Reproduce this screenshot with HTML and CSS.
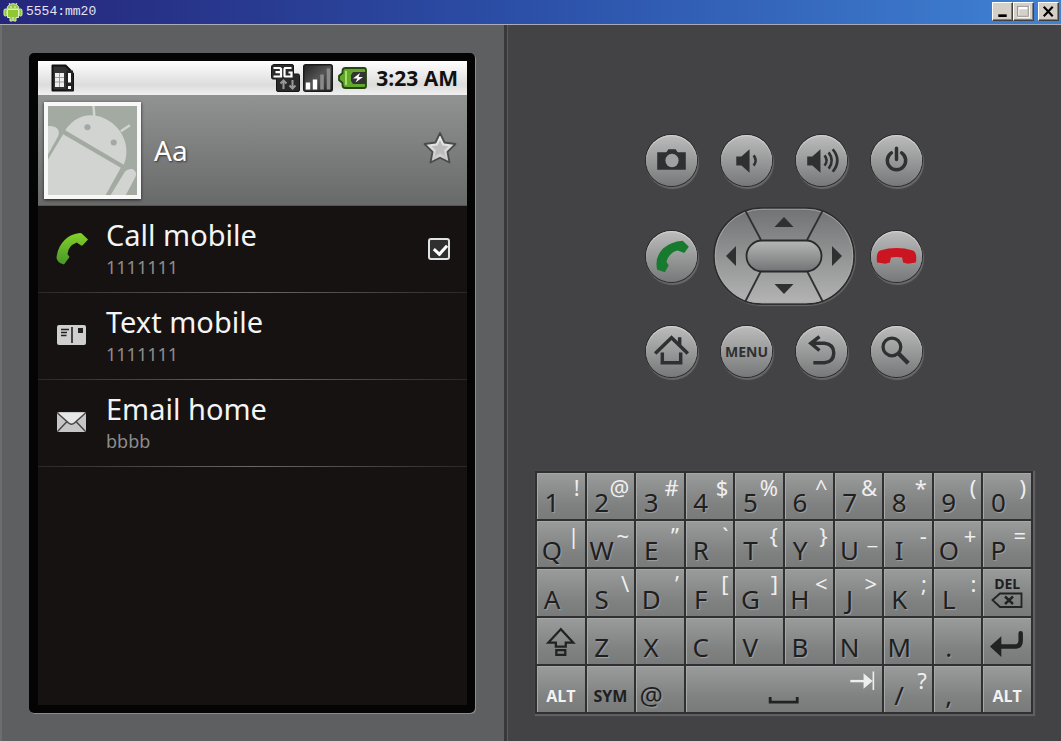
FILE: index.html
```html
<!DOCTYPE html>
<html lang="en">
<head>
<meta charset="utf-8">
<title>5554:mm20</title>
<link rel="stylesheet" href="styles.css">
</head>
<body>
<header class="titlebar">
  <svg class="titlebar-logo" viewBox="0 0 20 20" aria-hidden="true">
    <g fill="#8fc832" stroke="#dcefc0" stroke-width="1">
      <path d="M6 1l1.500 2.300M14 1l-1.500 2.300"/>
      <path d="M4 7a6 5.300 0 0 1 12 0z"/>
      <rect x="1" y="7" width="3" height="7" rx="1.400"/>
      <rect x="16" y="7" width="3" height="7" rx="1.400"/>
      <path d="M4.500 7.500h11v8h-2.500v3.500h-2.300v-3.500h-1.400v3.500h-2.300v-3.500h-2.500z"/>
    </g>
    <circle cx="8" cy="5" r=".8" fill="#fff"/><circle cx="12" cy="5" r=".8" fill="#fff"/>
  </svg>
  <h1 class="titlebar-text">5554:mm20</h1>
  <div class="titlebar-buttons">
    <button class="win-btn" aria-label="Minimize"><svg viewBox="0 0 18 16"><path d="M5 12h8" stroke="#000" stroke-width="2.500"/></svg></button>
    <button class="win-btn" aria-label="Maximize" disabled><svg viewBox="0 0 18 16"><path d="M4 3.500h10v9.500h-10zM4 5h10" fill="none" stroke="#fff" stroke-width="2"/><path d="M3.500 3h10v9.500h-10z" fill="none" stroke="#888"/></svg></button>
    <button class="win-btn win-close" aria-label="Close"><svg viewBox="0 0 18 16"><path d="M4.500 3.500l8.500 9M13 3.500l-8.500 9" stroke="#000" stroke-width="2"/></svg></button>
  </div>
</header>
<main class="emulator">
  <section class="device">
    <div class="phone">
      <div class="screen">
        <div class="status">
          <svg class="status-sim" viewBox="0 0 24 28" aria-hidden="true">
            <path d="M1.500 1.500h13l5 5v3h2.500v17h-20.500z" fill="#333" stroke="#111" stroke-width="2" stroke-linejoin="round"/>
            <path d="M4 9h9v14h-9z" fill="#eee"/><path d="M4 13.500h9M4 18h9M8.500 9v14" stroke="#888" stroke-width=".8"/>
            <path d="M15 6.500h7v20h-7z" fill="#222"/>
            <path d="M18.500 9v9.500M18.500 22v3" stroke="#fff" stroke-width="3"/>
          </svg>
          <svg class="status-3g" viewBox="0 0 29 28" aria-hidden="true">
            <path d="M3 .5h18q1.500 0 1.500 1.500v8h4.500q1.500 0 1.500 1.500v14.500q0 1.500-1.500 1.500h-20q-1.500 0-1.500-1.500v-11h-3.500q-1.500 0-1.500-1.500v-11q0-1.500 1.500-1.500z" fill="#2a2a2a" stroke="#151515"/>
            <path d="M2.500 4h6.500l1 1v7.500h-7.500M4.500 8.200h5.500M20.500 4h-6.500l-.5 1v7l.5.500h6.500v-4h-3" fill="none" stroke="#fff" stroke-width="2.200"/>
            <path d="M12.500 25v-8M9.500 19.500l3-3 3 3M21.500 16v8M18.500 21.500l3 3 3-3" fill="none" stroke="#999" stroke-width="2"/>
          </svg>
          <svg class="status-signal" viewBox="0 0 30 28" aria-hidden="true">
            <defs><linearGradient id="sig" x2="1" y2="1"><stop stop-color="#222"/><stop offset=".5" stop-color="#555"/><stop offset="1" stop-color="#222"/></linearGradient></defs>
            <rect x=".75" y=".75" width="28.500" height="26.500" rx="2" fill="url(#sig)" stroke="#1a1a1a" stroke-width="1.500"/>
            <path d="M5 25.500v-7M12 25.500v-10" stroke="#fff" stroke-width="4.400"/><path d="M19 25.500v-15M25.500 25.500v-21" stroke="#8a8a8a" stroke-width="3.600"/>
          </svg>
          <svg class="status-battery" viewBox="0 0 29 22" aria-hidden="true">
            <path d="M7.500 1h18.500q2 0 2 2v16q0 2-2 2h-18.500q-3 0-3-3v-2l-3.500-3v-4l3.500-3v-2q0-3 3-3z" fill="#63a82a" stroke="#244512" stroke-width="1.800"/>
            <path d="M8 4v14" stroke="#a6dc6a" stroke-width="2"/>
            <path d="M15 5h13v12h-13l-2-3v-6z" fill="#333"/><path d="M22 6l-7 5.500h4.500l-2 4 7.500-5.500h-4.500z" fill="#fff"/>
          </svg>
          <time class="status-time">3:23 AM</time>
        </div>
        <div class="contact">
          <svg class="avatar" viewBox="0 0 88 88" role="img" aria-label="Contact photo">
            <rect width="88" height="88" fill="#a2aaa2"/>
            <g fill="#d1d4d0">
              <path d="M17 24C31 3 53 7 66 19 78 30 80 46 75 58z"/>
              <path d="M15 28L72 61 57 88H0V53z"/>
              <path d="M0 20c7-1 13 3 10 10L0 48z"/>
              <path d="M76 65c6-6 14-1 10 6L77 88H62z"/>
            </g>
            <path d="M45 0l1 13M72 25l9-6" stroke="#d1d4d0" stroke-width="2.500"/>
            <circle cx="39" cy="21" r="3" fill="#a2a8a2"/><circle cx="65" cy="36" r="3" fill="#a2a8a2"/>
          </svg>
          <h2 class="contact-name">Aa</h2>
          <button class="star" aria-label="Favorite"><svg viewBox="0 0 34 34">
            <defs><linearGradient id="st" x2="0" y2="1"><stop stop-color="#f4f4f4"/><stop offset="1" stop-color="#c4c4c4"/></linearGradient></defs>
            <path d="M17 2l4.500 9.500 11 1.500-8 7.800 2 10.700L17 26.800 7.500 31.500l2-10.700L1.500 13l11-1.500z" fill="url(#st)" stroke="#4a4a4a" stroke-width="1.800" stroke-linejoin="round"/>
            <path d="M17 9l2.500 5.500 6 .8-4.500 4 1.200 6-5.200-3-5.200 3 1.200-6-4.500-4 6-.8z" fill="#bcbcbc"/></svg></button>
        </div>
        <ul class="actions">
          <li class="action">
            <svg class="action-icon" viewBox="0 0 34 34" aria-hidden="true">
              <defs><linearGradient id="ph" x2="0" y2="1"><stop stop-color="#86d128"/><stop offset="1" stop-color="#46962a"/></linearGradient></defs>
              <path d="M1.500 26C3 11 13 2 25 1q1.500 0 2.500 1.200l5.500 5.300-5.500 6-1.500 0-4.200-3Q13 14 12.500 22l2 3-5.500 7.500q-6.500-1.500-7.500-6.500z" fill="url(#ph)"/></svg>
            <div class="action-text"><a class="action-title" href="#call">Call mobile</a><span class="action-sub">1111111</span></div>
            <input class="action-check" type="checkbox" checked aria-label="Default number">
          </li>
          <li class="action">
            <svg class="action-icon" viewBox="0 0 34 34" aria-hidden="true"><rect x="2" y="6" width="29" height="20" rx="2" fill="#cfcfcf"/><path d="M17 8v16M6 10.500h8M6 13.500h6M6 16.500h5.500" stroke="#222" stroke-width="1.600"/><path d="M23 9h5v5h-5z" fill="#222"/></svg>
            <div class="action-text"><a class="action-title" href="#text">Text mobile</a><span class="action-sub">1111111</span></div>
          </li>
          <li class="action">
            <svg class="action-icon" viewBox="0 0 34 34" aria-hidden="true"><rect x="2" y="6" width="29" height="20" rx="2" fill="#c6c6c6"/><path d="M3 7h27L16.500 18z" fill="#e6e6e6"/><path d="M2.500 7L13.500 17q3 2.500 6 0L30.500 7M3 25l9-9.500M30 25l-9-9.500" fill="none" stroke="#444" stroke-width="1.400"/></svg>
            <div class="action-text"><a class="action-title" href="#email">Email home</a><span class="action-sub">bbbb</span></div>
          </li>
        </ul>
      </div>
    </div>
  </section>
  <section class="hardware">
    <div class="controls">
      <div class="control-row">
        <button class="round" aria-label="Camera"><svg viewBox="0 0 50 50"><path d="M11 17h9l2-3h7l2 3h8v17H11z" fill="#303032"/><circle cx="25.500" cy="25" r="6.500" fill="#a0a1a1"/></svg></button>
        <button class="round" aria-label="Volume down"><svg viewBox="0 0 50 50"><path d="M15 21h5l8-7v23l-8-7h-5z" fill="#303032"/><path d="M32 20q4 5 0 10" fill="none" stroke="#303032" stroke-width="2.600"/></svg></button>
        <button class="round" aria-label="Volume up"><svg viewBox="0 0 50 50"><path d="M11 21h5l8-7v23l-8-7h-5z" fill="#303032"/><path d="M28 20q4 5 0 10M32 17q6 8 0 16M36 14q9 11 0 22" fill="none" stroke="#303032" stroke-width="2.600"/></svg></button>
        <button class="round" aria-label="Power"><svg viewBox="0 0 50 50"><path d="M20 17.500a9 9 0 1 0 10 0M25 13v11" fill="none" stroke="#303032" stroke-width="3.400" stroke-linecap="round"/></svg></button>
      </div>
      <div class="control-row">
        <button class="round" aria-label="Call"><svg viewBox="0 0 50 50"><path d="M11 38Q8 26 17 17 24 10.500 36 9.500L42 15.500 37.500 21.500 31 19Q22.500 21 20 30.500L22.300 33.500 18.500 40.500z" fill="#177a2e"/></svg></button>
        <div class="dpad">
          <svg class="dpad-art" viewBox="0 0 142 98" aria-hidden="true">
            <defs><linearGradient id="dp" x2="0" y2="1"><stop stop-color="#717273"/><stop offset="1" stop-color="#b3b4b3"/></linearGradient><linearGradient id="ok" x2="0" y2="1"><stop stop-color="#b6b8b6"/><stop offset="1" stop-color="#727374"/></linearGradient></defs>
            <rect x="1" y="1" width="140" height="96" rx="48" fill="url(#dp)" stroke="#2b2b2d" stroke-width="1.500"/>
            <rect x="2.300" y="2.300" width="137.400" height="93.400" rx="46.500" fill="none" stroke="#aaa" stroke-width=".8"/>
            <path d="M32 3l16 30M110 3L94 33M32 95l16-31M110 95L94 64" stroke="#303032" stroke-width="1.800"/>
            <rect x="33.500" y="33.500" width="75" height="31" rx="15.500" fill="url(#ok)" stroke="#29292b" stroke-width="1.800"/>
            <path d="M71 10l9.500 10h-19zM71 87l9.500-10h-19zM13 49l10-10v20zM129 49l-10-10v20z" fill="#303032"/>
          </svg>
          <button class="dpad-btn dpad-up" aria-label="Up"></button><button class="dpad-btn dpad-left" aria-label="Left"></button><button class="dpad-btn dpad-ok" aria-label="Select"></button><button class="dpad-btn dpad-right" aria-label="Right"></button><button class="dpad-btn dpad-down" aria-label="Down"></button>
        </div>
        <button class="round" aria-label="End call"><svg viewBox="0 0 50 50"><path d="M6 31Q4.500 21 9 19q16-4.500 32 0Q45.500 21 44 31l-8 1-4.500-1-1-5q-5.500-1-11 0l-1 5-4.500 1z" fill="#cb1622"/></svg></button>
      </div>
      <div class="control-row">
        <button class="round" aria-label="Home"><svg viewBox="0 0 50 50"><path d="M9 27L25 11.500l16 15.500M33 19v-8M16 26v10h18V26" fill="none" stroke="#303032" stroke-width="3.400"/></svg></button>
        <button class="round round-text">MENU</button>
        <button class="round" aria-label="Back"><svg viewBox="0 0 50 50"><path d="M17 36h11q9-1 9-9.500T28 17H15M23 10.500L14.500 17l8.500 7" fill="none" stroke="#303032" stroke-width="3.400"/></svg></button>
        <button class="round" aria-label="Search"><svg viewBox="0 0 50 50"><circle cx="20.500" cy="20.500" r="8.700" fill="none" stroke="#303032" stroke-width="3.200"/><path d="M26.500 26.500L36.500 36.500" stroke="#303032" stroke-width="4.200"/></svg></button>
      </div>
    </div>
    <div class="keyboard">
      <button class="key"><span class="main">1</span><span class="alt">!</span></button>
      <button class="key"><span class="main">2</span><span class="alt">@</span></button>
      <button class="key"><span class="main">3</span><span class="alt">#</span></button>
      <button class="key"><span class="main">4</span><span class="alt">$</span></button>
      <button class="key"><span class="main">5</span><span class="alt">%</span></button>
      <button class="key"><span class="main">6</span><span class="alt">^</span></button>
      <button class="key"><span class="main">7</span><span class="alt">&amp;</span></button>
      <button class="key"><span class="main">8</span><span class="alt">*</span></button>
      <button class="key"><span class="main">9</span><span class="alt">(</span></button>
      <button class="key"><span class="main">0</span><span class="alt">)</span></button>

      <button class="key"><span class="main">Q</span><span class="alt">|</span></button>
      <button class="key"><span class="main">W</span><span class="alt">~</span></button>
      <button class="key"><span class="main">E</span><span class="alt">”</span></button>
      <button class="key"><span class="main">R</span><span class="alt">`</span></button>
      <button class="key"><span class="main">T</span><span class="alt">{</span></button>
      <button class="key"><span class="main">Y</span><span class="alt">}</span></button>
      <button class="key"><span class="main">U</span><span class="alt">_</span></button>
      <button class="key"><span class="main">I</span><span class="alt">-</span></button>
      <button class="key"><span class="main">O</span><span class="alt">+</span></button>
      <button class="key"><span class="main">P</span><span class="alt">=</span></button>

      <button class="key"><span class="main">A</span></button>
      <button class="key"><span class="main">S</span><span class="alt">\</span></button>
      <button class="key"><span class="main">D</span><span class="alt">’</span></button>
      <button class="key"><span class="main">F</span><span class="alt">[</span></button>
      <button class="key"><span class="main">G</span><span class="alt">]</span></button>
      <button class="key"><span class="main">H</span><span class="alt">&lt;</span></button>
      <button class="key"><span class="main">J</span><span class="alt">&gt;</span></button>
      <button class="key"><span class="main">K</span><span class="alt">;</span></button>
      <button class="key"><span class="main">L</span><span class="alt">:</span></button>
      <button class="key key-del"><span>DEL</span><svg viewBox="0 0 32 17" aria-hidden="true"><path d="M9 1.500h21.500v13.500H9L1.500 8z" fill="none" stroke="#222" stroke-width="1.800"/><path d="M14 4.500l8 7.500M22 4.500L14 12" stroke="#222" stroke-width="2.400"/></svg></button>

      <button class="key" aria-label="Shift"><svg class="key-art" viewBox="0 0 48 46"><path d="M24 11L11.500 24.500H19v4h10v-4h7.500zM19.500 32h9v5h-9z" fill="none" stroke="#222" stroke-width="2.300"/></svg></button>
      <button class="key"><span class="main">Z</span></button>
      <button class="key"><span class="main">X</span></button>
      <button class="key"><span class="main">C</span></button>
      <button class="key"><span class="main">V</span></button>
      <button class="key"><span class="main">B</span></button>
      <button class="key"><span class="main">N</span></button>
      <button class="key"><span class="main">M</span></button>
      <button class="key"><span class="main">.</span></button>
      <button class="key" aria-label="Enter"><svg class="key-art" viewBox="0 0 48 46"><path d="M38 15v8q0 5.500-5.500 5.500H15" fill="none" stroke="#222" stroke-width="4.500" stroke-linecap="round"/><path d="M7 28.500L18.500 18v21z" fill="#222"/></svg></button>

      <button class="key key-word key-light">ALT</button>
      <button class="key key-word">SYM</button>
      <button class="key"><span class="main">@</span></button>
      <button class="key key-space" aria-label="Space"><svg class="key-art" viewBox="0 0 196 46"><path d="M84 31v5h27v-5" fill="none" stroke="#222" stroke-width="2.800"/><path d="M164 15h18" stroke="#eee" stroke-width="2.400"/><path d="M178 9l7 6-7 6zM187 5.500V24" fill="#eee" stroke="#eee" stroke-width="1.600"/></svg></button>
      <button class="key"><span class="main">/</span><span class="alt">?</span></button>
      <button class="key"><span class="main">,</span></button>
      <button class="key key-word key-light">ALT</button>
    </div>
  </section>
</main>
</body>
</html>
```
FILE: styles.css
```css
* { box-sizing: border-box; }
body {
  margin: 0;
  min-height: 100vh;
  display: flex;
  flex-direction: column;
  background: #434345;
  font-family: "Noto Sans", "Open Sans", sans-serif;
}
button { margin: 0; padding: 0; border: 0; background: none; font: inherit; color: inherit; }
svg { display: block; }

.titlebar {
  display: flex;
  align-items: center;
  gap: 3px;
  height: 25px;
  padding: 0 2px 1px 3px;
  background: linear-gradient(90deg, #25267a, #2c50a8 50%, #3f82d4);
  border-bottom: 1px solid #a9acb2;
}
.titlebar-logo { width: 20px; height: 20px; }
.titlebar-text {
  flex: 1;
  margin: 0;
  color: #e4e4f4;
  font: 13px "Liberation Mono", monospace;
}
.titlebar-buttons { display: flex; }
.win-btn {
  width: 21px;
  height: 19px;
  background: #d4d0c8;
  border: 1px solid;
  border-color: #fff #404040 #404040 #fff;
  box-shadow: inset -1px -1px #808080;
}
.win-close { margin-left: 4px; }

.emulator { flex: 1; display: grid; grid-template-columns: 507fr 554fr; }
.device {
  display: flex;
  padding: 28px 29px;
  background: #5e5f61;
  border-right: 3px solid #38383a;
  box-shadow: inset 2px 0 #6c6d6f, 1px 0 #5b5b5d;
}
.phone {
  flex: 1;
  display: flex;
  padding: 8px 8px 8px 9px;
  background: #050404;
  border-radius: 5px;
  box-shadow: 1px 1px #8b8c8e;
}
.screen { flex: 1; background: #151211; }

.status {
  display: flex;
  align-items: center;
  height: 34px;
  padding: 0 9px 0 13px;
  background: linear-gradient(#fff, #dcdcdc 70%, #f0f0f0);
}
.status-sim { width: 24px; height: 28px; margin-right: auto; }
.status-3g { width: 29px; height: 28px; margin-right: 3px; }
.status-signal { width: 30px; height: 28px; margin-right: 5px; }
.status-battery { width: 29px; height: 22px; margin-right: 9px; }
.status-time { font-family: "Open Sans", sans-serif; font-size: 21px; font-weight: 700; color: #111; }

.contact {
  display: flex;
  align-items: center;
  height: 111px;
  padding: 0 10px 0 6px;
  background: linear-gradient(#919292, #686969);
  border-bottom: 1px solid #555;
}
.avatar {
  width: 97px;
  height: 97px;
  border: 4px solid #f8f8f8;
  box-shadow: 0 1px 3px #222;
}
.contact-name {
  flex: 1;
  margin: 0 0 0 13px;
  font-size: 28px;
  font-weight: 400;
  color: #fff;
  text-shadow: 1px 1px 2px #333;
}
.star { width: 34px; height: 34px; margin-bottom: 5px; }

.actions { margin: 0; padding: 0; list-style: none; }
.action {
  display: flex;
  align-items: center;
  height: 87px;
  padding: 0 17px 0 17px;
  border-bottom: 1px solid;
  border-image: linear-gradient(90deg, #2a2726, #6a6968 50%, #2a2726) 1;
}
.action-icon { width: 34px; height: 34px; }
.action-text {
  flex: 1;
  display: flex;
  flex-direction: column;
  margin-left: 17px;
}
.action-title { font-size: 29px; line-height: 36px; color: #f4f4f4; text-decoration: none; }
.action-sub { font-size: 18px; line-height: 28px; color: #8d8c8b; }
.action-check {
  appearance: none;
  position: relative;
  width: 22px;
  height: 22px;
  margin: 0;
  border: 2px solid #e2e2e2;
  border-radius: 3px;
  background: #303030;
}
.action-check:checked::after {
  content: "";
  position: absolute;
  left: 6px;
  top: 2px;
  width: 6px;
  height: 10px;
  border: solid #fff;
  border-width: 0 3px 3px 0;
  transform: rotate(42deg);
}

.hardware {
  display: flex;
  flex-direction: column;
  align-items: center;
  padding: 110px 28px 27px;
}
.controls { display: flex; flex-direction: column; gap: 21px; width: 276px; margin-bottom: 94px; }
.control-row { display: flex; align-items: center; justify-content: space-between; }
.round {
  width: 51px;
  height: 51px;
  border-radius: 50%;
  background: linear-gradient(#bbbcbb, #777879);
  box-shadow: inset 0 1px 1px #d5d5d5, 0 0 0 1px #2a2a2c, 1px 2px 1px 1px #69696b;
}
.round-text { font-family: "Open Sans", sans-serif; font-size: 14px; font-weight: 700; color: #303032; }
.dpad {
  position: relative;
  display: grid;
  grid-template: 33px 32px 33px / 33px 76px 33px;
  border-radius: 49px;
  box-shadow: 1px 1px 1px #69696b;
}
.dpad-art { position: absolute; inset: 0; width: 100%; height: 100%; }
.dpad-btn { position: relative; }
.dpad-up { grid-area: 1 / 2; }
.dpad-left { grid-area: 2 / 1; }
.dpad-ok { grid-area: 2 / 2; }
.dpad-right { grid-area: 2 / 3; }
.dpad-down { grid-area: 3 / 2; }

.keyboard {
  display: grid;
  grid-template-columns: repeat(10, 1fr);
  grid-auto-rows: 1fr;
  gap: 2px;
  width: 100%;
  max-width: 498px;
  min-height: 243px;
  padding: 2px;
  background: #303032;
  box-shadow: 1px 1px 1px 1px #606062;
}
.key {
  display: grid;
  grid-template: 1fr / 1fr;
  background: linear-gradient(#9a9b9b, #7f8080 70%, #797a7a);
  box-shadow: inset 1px 1px #a6a7a7;
  color: #1f1f21;
}
.main {
  grid-area: 1 / 1;
  align-self: end;
  width: 30px;
  font-size: 26px;
  line-height: 34px;
  text-align: center;
  text-shadow: 1px 1px 1px #a0a0a0;
}
.alt {
  grid-area: 1 / 1;
  place-self: start end;
  padding-right: 5px;
  font-size: 22px;
  line-height: 28px;
  color: #efefef;
}
.key-art { width: 100%; height: 100%; }
.key-space { grid-column: span 4; }
.key-word {
  padding: 18px 0 0;
  place-content: center;
  font-family: "Open Sans", sans-serif;
  font-size: 16px;
  line-height: 24px;
  font-weight: 700;
}
.key-light { color: #f2f2f2; }
.key-del {
  grid-template: auto auto / auto;
  place-content: center;
  place-items: center;
  font-family: "Open Sans", sans-serif;
  font-size: 14px;
  line-height: 16px;
  font-weight: 700;
}
.key-del svg { width: 32px; height: 17px; }
```
